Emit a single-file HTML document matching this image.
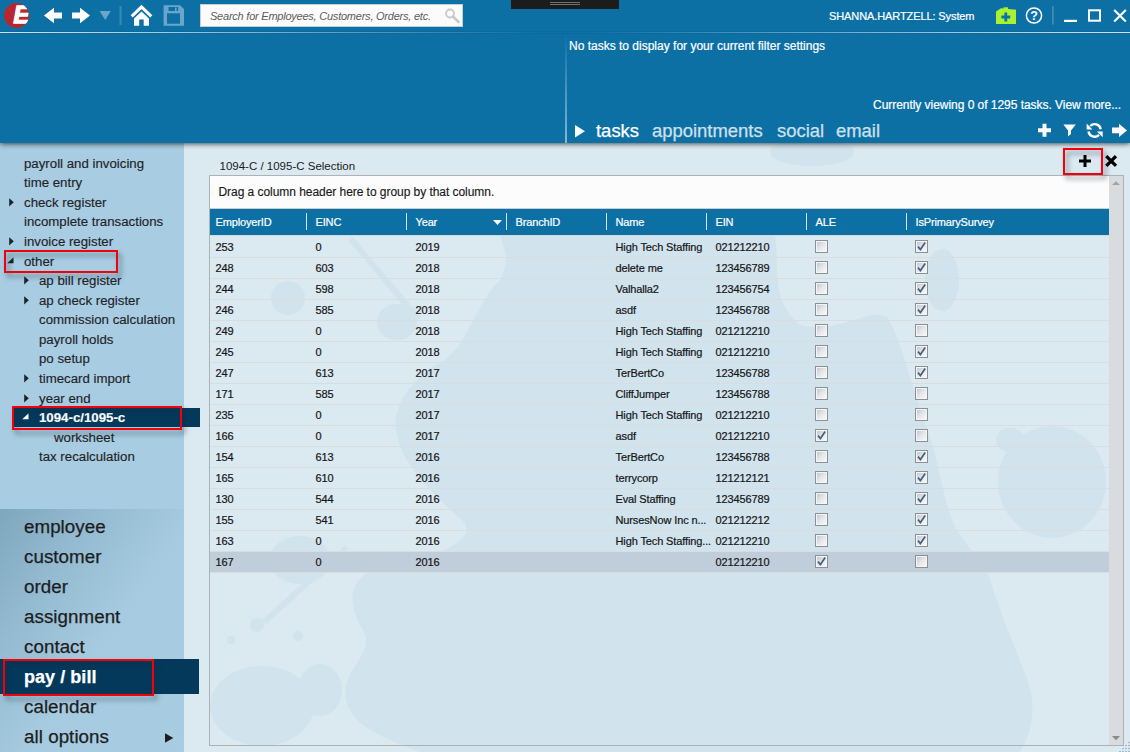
<!DOCTYPE html>
<html lang="en">
<head>
<meta charset="utf-8">
<title>1094-C / 1095-C Selection</title>
<style>
*{box-sizing:border-box;margin:0;padding:0}
html,body{width:1130px;height:752px;overflow:hidden}
body{position:relative;background:#dbe9f1;font-family:"Liberation Sans",sans-serif;color:#1a1a1a}
.abs{position:absolute}
i{font-style:normal}
/* header */
#hdr{left:0;top:0;width:1130px;height:143px;background:#0d70a5;box-shadow:0 1px 5px rgba(20,25,30,.75);z-index:5}
#hline{left:0;top:32px;width:1130px;height:1px;background:linear-gradient(90deg,rgba(205,227,240,1) 0%,rgba(180,212,231,.9) 14%,rgba(150,195,220,0) 48%,rgba(150,195,220,0) 52%,rgba(180,212,231,.9) 86%,rgba(205,227,240,1) 100%);box-shadow:0 0 0 1px rgba(0,60,110,.12)}
#vline{left:565px;top:34px;width:2px;height:109px;background:linear-gradient(180deg,rgba(150,195,222,0) 0%,rgba(150,195,222,.35) 40%,rgba(160,202,226,.8) 100%)}
#blacktab{left:511px;top:0;width:108px;height:9px;background:#1c1c1c}
#search{left:200px;top:4px;width:263px;height:23px;background:#fbfbfb;border:1px solid #c3ced6}
#search span{position:absolute;left:9px;top:4px;font:italic 11px/14px "Liberation Sans",sans-serif;color:#5c5c5c;white-space:nowrap;letter-spacing:-0.23px}
.seg{font-family:"Liberation Sans",sans-serif;white-space:nowrap;line-height:14px;-webkit-text-stroke:0.2px currentColor}
#user{left:829px;top:9px;font-size:11px;color:#fff;letter-spacing:-0.1px}
#notask{left:569px;top:39px;font-size:12px;color:#fff}
#viewing{left:873px;top:98px;font-size:12px;color:#fff;letter-spacing:-0.04px}
.tab{top:120px;font-size:18.45px;-webkit-text-stroke:0.25px currentColor;line-height:22px;color:#cfe0eb;white-space:nowrap}
/* sidebar */
#side{left:0;top:143px;width:184px;height:609px;background:#a8cce1}
#navbg{left:0;top:509px;width:184px;height:243px;background:linear-gradient(125deg,#7ea6bd 0%,#92b9cf 25%,#a6cbe0 55%,#a8cce1 100%)}
.ti{position:absolute;font-size:13.25px;-webkit-text-stroke:0.15px currentColor;color:#1f2328;white-space:nowrap;line-height:16px}
.sel{background:#04395b}
.nv{position:absolute;left:24px;font-size:18.75px;letter-spacing:0.05px;-webkit-text-stroke:0.25px currentColor;color:#1d1d1f;white-space:nowrap;line-height:22px}
.red{position:absolute;border:2px solid #f4000a;filter:drop-shadow(3px 4px 2.5px rgba(20,35,50,.5));z-index:9}
/* grid */
#grid{left:209px;top:175px;width:915px;height:571px;border:1px solid #aeb2b5}
#gp{left:210px;top:176px;width:899px;height:33px;background:#fcfcfc;border-bottom:1px solid #c9ced2}
#gp span{-webkit-text-stroke:0.15px currentColor;position:absolute;left:8.5px;top:9px;font-size:12px;line-height:14px;color:#1a1a1a;white-space:nowrap;letter-spacing:-0.05px}
#gh{left:210px;top:209px;width:899px;height:26px;background:#0d70a5}
#ghl{left:210px;top:235px;width:899px;height:1px;background:#d5d8db}
.hc{position:absolute;top:6px;-webkit-text-stroke:0.2px currentColor;font-size:11px;line-height:14px;color:#fff;white-space:nowrap;letter-spacing:-0.15px}
.hs{position:absolute;top:4px;width:1px;height:17px;background:#d6e6f0}
.row{position:absolute;left:210px;width:899px;height:21px;border-bottom:1px solid #dadde0}
.row span{position:absolute;top:4px;font-size:11px;color:#161616;-webkit-text-stroke:0.2px currentColor;white-space:nowrap;line-height:13px;letter-spacing:-0.12px}
.cb{position:absolute;top:3px;width:13px;height:13px;border:1px solid #8e8f90;background:#f4f5f6;padding:0}
.cb:before{content:"";position:absolute;left:1px;top:1px;width:9px;height:9px;background:linear-gradient(135deg,#c2c9d2,#e4e7eb 50%,#f6f7f8)}
#sb{left:1109px;top:176px;width:14px;height:569px;background:#d9dcde}
#title{left:219.5px;top:159px;font-size:11.5px;line-height:14px;color:#1a1a1a;white-space:nowrap}
</style>
</head>
<body>
<div id="hdr" class="abs">
 <div id="hline" class="abs"></div>
 <div id="vline" class="abs"></div>
 <div id="blacktab" class="abs"><i class="abs" style="left:39px;top:2px;width:30px;height:1px;background:#707070"></i><i class="abs" style="left:39px;top:4px;width:30px;height:1px;background:#707070"></i></div>
 <svg class="abs" style="left:0;top:0" width="200" height="32" viewBox="0 0 200 32">
<defs><clipPath id="lc"><circle cx="16.5" cy="15.5" r="12.5"/></clipPath></defs>
<circle cx="16.5" cy="15.5" r="12.5" fill="#b7282e"/>
<g clip-path="url(#lc)"><text x="13.4" y="23.2" font-family="Liberation Sans, sans-serif" font-weight="bold" font-style="italic" font-size="23.5" fill="#fff" stroke="#fff" stroke-width="1.3">E</text></g>
<path d="M44 15.5L54 7.8V12.6H62V18.6H54V23.2Z" fill="#fff"/>
<path d="M72 12.6H80V7.8L90 15.5L80 23.2V18.6H72Z" fill="#fff"/>
<path d="M99.6 11H110.8L105.2 20Z" fill="#6ba6ca"/>
<rect x="119.5" y="6" width="2" height="19" fill="#3c88b5"/>
<path d="M131.7 16.4L141.5 6.9L151.3 16.4" fill="none" stroke="#fff" stroke-width="3"/>
<path d="M134 18.6L141.5 11.6L149 18.6V25.8H143.7V19.6H139.2V25.8H134Z" fill="#fff"/>
<path fill-rule="evenodd" d="M163.6 5.3H180L184 9V25.8H163.6Z M168.5 7H178.2V11H168.5Z M167 13.3H180V23.7H167Z" fill="#6ba6ca"/>
<rect x="175" y="7.6" width="1.6" height="3.4" fill="#6ba6ca"/>
</svg>
<svg class="abs" style="left:440px;top:6px;z-index:3" width="22" height="20" viewBox="440 6 22 20">
<circle cx="450" cy="13.5" r="4" fill="none" stroke="#c9c9c9" stroke-width="1.8"/>
<path d="M453 16.5L458.5 22" stroke="#c9c9c9" stroke-width="2.6" stroke-linecap="round"/>
</svg>
<svg class="abs" style="left:990px;top:0" width="140" height="32" viewBox="990 0 140 32">
<path d="M996 11.5L1001 8.3L1016 9.8V24H996Z" fill="#a8f230"/>
<rect x="1003.5" y="7.3" width="4.5" height="2" fill="#a8f230"/>
<path d="M1004.4 12.6H1007.2V15.6H1010.2V18.4H1007.2V21.4H1004.4V18.4H1001.4V15.6H1004.4Z" fill="#0d70a5"/>
<circle cx="1034" cy="15.5" r="7.6" fill="none" stroke="#fff" stroke-width="1.5"/>
<text x="1034" y="20" text-anchor="middle" font-family="Liberation Sans, sans-serif" font-weight="bold" font-size="12.5" fill="#fff">?</text>
<rect x="1052" y="6" width="1.8" height="18.5" fill="#3f8ab6"/>
<rect x="1064" y="19.8" width="13" height="2.2" fill="#fff"/>
<rect x="1089" y="10.3" width="11" height="10.4" fill="none" stroke="#fff" stroke-width="2"/>
<path d="M1114.2 10L1125.8 21.5M1125.8 10L1114.2 21.5" stroke="#fff" stroke-width="2.2"/>
</svg>
<svg class="abs" style="left:570px;top:118px" width="560" height="24" viewBox="570 118 560 24">
<path d="M575 125.1L585 131.2L575 137.4Z" fill="#fff"/>
<path d="M1042.5 123.8H1046.5V128.2H1051V132.2H1046.5V136.7H1042.5V132.2H1038V128.2H1042.5Z" fill="#fff"/>
<path d="M1063.4 124.5H1075.8L1071 130.5V134L1068 136.4V130.5Z" fill="#fff"/>
<path d="M1090.2 126.0A6.2 6.2 0 0 1 1100.7 129.3" fill="none" stroke="#fff" stroke-width="2.4"/>
<path d="M1099.0 134.8A6.2 6.2 0 0 1 1088.5 131.5" fill="none" stroke="#fff" stroke-width="2.4"/>
<path d="M1086.6 123.6V129.4H1092.4Z" fill="#fff"/>
<path d="M1102.7 137.2V131.4H1096.9Z" fill="#fff"/>
<path d="M1112 127.6H1119V123.8L1127 130.4L1119 137V133.2H1112Z" fill="#fff"/>
</svg>
 <div id="search" class="abs"><span>Search for Employees, Customers, Orders, etc.</span></div>
 <div id="user" class="abs seg">SHANNA.HARTZELL: System</div>
 <div id="notask" class="abs seg">No tasks to display for your current filter settings</div>
 <div id="viewing" class="abs seg">Currently viewing 0 of 1295 tasks. View more...</div>
 <div class="abs tab" style="left:596px;color:#fff">tasks</div>
 <div class="abs tab" style="left:652px">appointments</div>
 <div class="abs tab" style="left:777px">social</div>
 <div class="abs tab" style="left:836px">email</div>
</div>
<svg class="abs" style="left:184px;top:143px" width="946" height="609" viewBox="184 143 946 609">
<g fill="#d1e3ed">
<path d="M500 236L775 236C780 270 770 300 800 325C840 335 870 305 888 318C905 350 915 400 930 436C940 470 944 500 952 520C962 545 985 560 990 580C1000 612 1014 646 1026 676C1036 700 1034 730 1020 752H420C390 740 352 728 346 700C340 668 378 654 362 628C345 600 350 574 385 566C440 556 480 540 462 520C430 492 400 462 396 430C392 400 420 372 445 360C470 340 478 300 500 280C510 262 505 248 500 236Z"/>
<ellipse cx="942" cy="280" rx="17" ry="31"/>
<path d="M349 241L353 237L421 317L416 321Z"/>
<ellipse cx="397" cy="322" rx="20" ry="18"/>
<ellipse cx="1052" cy="482" rx="54" ry="56"/>
<ellipse cx="1010" cy="440" rx="14" ry="12"/>
<ellipse cx="262" cy="706" rx="52" ry="40"/>
<ellipse cx="320" cy="690" rx="22" ry="26"/>
<ellipse cx="300" cy="560" rx="30" ry="24"/>
<circle cx="288" cy="298" r="17"/>
<ellipse cx="812" cy="152" rx="42" ry="14"/>
<circle cx="257" cy="625" r="7"/><circle cx="231" cy="640" r="4"/><circle cx="298" cy="636" r="5"/>
<path d="M262 620L345 545L349 549L266 624Z"/>
</g>
</svg>
<div id="side" class="abs"></div>
<div id="navbg" class="abs"></div>
<div class="ti" style="left:24px;top:155.6px">payroll and invoicing</div>
<div class="ti" style="left:24px;top:175.18px">time entry</div>
<div class="ti" style="left:24px;top:194.76px">check register</div>
<svg class="abs" style="left:9px;top:197.9px" width="6" height="9"><path d="M0.2 0.2L4.8 4.3L0.2 8.4Z" fill="#1f2328"/></svg>
<div class="ti" style="left:24px;top:214.34px">incomplete transactions</div>
<div class="ti" style="left:24px;top:233.92px">invoice register</div>
<svg class="abs" style="left:9px;top:237.0px" width="6" height="9"><path d="M0.2 0.2L4.8 4.3L0.2 8.4Z" fill="#1f2328"/></svg>
<div class="ti" style="left:24px;top:253.5px">other</div>
<svg class="abs" style="left:7px;top:256.7px" width="7" height="7"><path d="M6.5 0.3V6.3H0.3Z" fill="#1f2328"/></svg>
<div class="ti" style="left:39px;top:273.08px">ap bill register</div>
<svg class="abs" style="left:24px;top:276.2px" width="6" height="9"><path d="M0.2 0.2L4.8 4.3L0.2 8.4Z" fill="#1f2328"/></svg>
<div class="ti" style="left:39px;top:292.66px">ap check register</div>
<svg class="abs" style="left:24px;top:295.8px" width="6" height="9"><path d="M0.2 0.2L4.8 4.3L0.2 8.4Z" fill="#1f2328"/></svg>
<div class="ti" style="left:39px;top:312.24px">commission calculation</div>
<div class="ti" style="left:39px;top:331.82px">payroll holds</div>
<div class="ti" style="left:39px;top:351.4px">po setup</div>
<div class="ti" style="left:39px;top:370.98px">timecard import</div>
<svg class="abs" style="left:24px;top:374.1px" width="6" height="9"><path d="M0.2 0.2L4.8 4.3L0.2 8.4Z" fill="#1f2328"/></svg>
<div class="ti" style="left:39px;top:390.56px">year end</div>
<svg class="abs" style="left:24px;top:393.7px" width="6" height="9"><path d="M0.2 0.2L4.8 4.3L0.2 8.4Z" fill="#1f2328"/></svg>
<div class="abs sel" style="left:13px;top:408px;width:187px;height:19px"></div>
<div class="ti" style="left:39px;top:410.14px;color:#fff;font-weight:bold">1094-c/1095-c</div>
<svg class="abs" style="left:22px;top:413.3px" width="7" height="7"><path d="M6.5 0.3V6.3H0.3Z" fill="#fff"/></svg>
<div class="ti" style="left:54px;top:429.72px">worksheet</div>
<div class="ti" style="left:39px;top:449.3px">tax recalculation</div>
<div class="nv" style="top:516px">employee</div>
<div class="nv" style="top:546px">customer</div>
<div class="nv" style="top:576px">order</div>
<div class="nv" style="top:606px">assignment</div>
<div class="nv" style="top:636px">contact</div>
<div class="abs sel" style="left:0;top:659px;width:199px;height:35px"></div>
<div class="nv" style="top:666px;color:#fff;font-weight:bold;font-size:18px">pay / bill</div>
<div class="nv" style="top:696px">calendar</div>
<div class="nv" style="top:726px">all options</div>
<svg class="abs" style="left:165px;top:733px" width="9" height="10"><path d="M0 0.3L8.3 5L0 9.7Z" fill="#1d1d1d"/></svg>
<div id="title" class="abs">1094-C / 1095-C Selection</div>
<div id="grid" class="abs"></div>
<div id="gp" class="abs"><span>Drag a column header here to group by that column.</span></div>
<div id="gh" class="abs"><span class="hc" style="left:5.5px">EmployerID</span><span class="hc" style="left:105.5px">EINC</span><i class="hs" style="left:96px"></i><span class="hc" style="left:205.5px">Year</span><i class="hs" style="left:196px"></i><span class="hc" style="left:305.5px">BranchID</span><i class="hs" style="left:296px"></i><span class="hc" style="left:405.5px">Name</span><i class="hs" style="left:396px"></i><span class="hc" style="left:505.5px">EIN</span><i class="hs" style="left:496px"></i><span class="hc" style="left:605.5px">ALE</span><i class="hs" style="left:596px"></i><span class="hc" style="left:705.5px">IsPrimarySurvey</span><i class="hs" style="left:696px"></i><svg class="abs" style="left:283px;top:10.5px" width="9" height="6"><path d="M0 0H9L4.5 5Z" fill="#fff"/></svg></div>
<div id="ghl" class="abs"></div>
<div id="sb" class="abs"></div>
<div class="row" style="top:237px"><span style="left:5.5px">253</span><span style="left:105.5px">0</span><span style="left:205.5px">2019</span><span style="left:405.5px">High Tech Staffing</span><span style="left:505.5px">021212210</span><i class="cb" style="left:605px"></i><i class="cb" style="left:705px"><svg width="11" height="11" viewBox="0 0 11 11" style="position:absolute;left:0;top:0"><path d="M2 5.6L4.4 8.6L9.2 1.6" fill="none" stroke="#46607f" stroke-width="1.7"/></svg></i></div>
<div class="row" style="top:258px"><span style="left:5.5px">248</span><span style="left:105.5px">603</span><span style="left:205.5px">2018</span><span style="left:405.5px">delete me</span><span style="left:505.5px">123456789</span><i class="cb" style="left:605px"></i><i class="cb" style="left:705px"><svg width="11" height="11" viewBox="0 0 11 11" style="position:absolute;left:0;top:0"><path d="M2 5.6L4.4 8.6L9.2 1.6" fill="none" stroke="#46607f" stroke-width="1.7"/></svg></i></div>
<div class="row" style="top:279px"><span style="left:5.5px">244</span><span style="left:105.5px">598</span><span style="left:205.5px">2018</span><span style="left:405.5px">Valhalla2</span><span style="left:505.5px">123456754</span><i class="cb" style="left:605px"></i><i class="cb" style="left:705px"><svg width="11" height="11" viewBox="0 0 11 11" style="position:absolute;left:0;top:0"><path d="M2 5.6L4.4 8.6L9.2 1.6" fill="none" stroke="#46607f" stroke-width="1.7"/></svg></i></div>
<div class="row" style="top:300px"><span style="left:5.5px">246</span><span style="left:105.5px">585</span><span style="left:205.5px">2018</span><span style="left:405.5px">asdf</span><span style="left:505.5px">123456788</span><i class="cb" style="left:605px"></i><i class="cb" style="left:705px"><svg width="11" height="11" viewBox="0 0 11 11" style="position:absolute;left:0;top:0"><path d="M2 5.6L4.4 8.6L9.2 1.6" fill="none" stroke="#46607f" stroke-width="1.7"/></svg></i></div>
<div class="row" style="top:321px"><span style="left:5.5px">249</span><span style="left:105.5px">0</span><span style="left:205.5px">2018</span><span style="left:405.5px">High Tech Staffing</span><span style="left:505.5px">021212210</span><i class="cb" style="left:605px"></i><i class="cb" style="left:705px"></i></div>
<div class="row" style="top:342px"><span style="left:5.5px">245</span><span style="left:105.5px">0</span><span style="left:205.5px">2018</span><span style="left:405.5px">High Tech Staffing</span><span style="left:505.5px">021212210</span><i class="cb" style="left:605px"></i><i class="cb" style="left:705px"><svg width="11" height="11" viewBox="0 0 11 11" style="position:absolute;left:0;top:0"><path d="M2 5.6L4.4 8.6L9.2 1.6" fill="none" stroke="#46607f" stroke-width="1.7"/></svg></i></div>
<div class="row" style="top:363px"><span style="left:5.5px">247</span><span style="left:105.5px">613</span><span style="left:205.5px">2017</span><span style="left:405.5px">TerBertCo</span><span style="left:505.5px">123456788</span><i class="cb" style="left:605px"></i><i class="cb" style="left:705px"><svg width="11" height="11" viewBox="0 0 11 11" style="position:absolute;left:0;top:0"><path d="M2 5.6L4.4 8.6L9.2 1.6" fill="none" stroke="#46607f" stroke-width="1.7"/></svg></i></div>
<div class="row" style="top:384px"><span style="left:5.5px">171</span><span style="left:105.5px">585</span><span style="left:205.5px">2017</span><span style="left:405.5px">CliffJumper</span><span style="left:505.5px">123456788</span><i class="cb" style="left:605px"></i><i class="cb" style="left:705px"></i></div>
<div class="row" style="top:405px"><span style="left:5.5px">235</span><span style="left:105.5px">0</span><span style="left:205.5px">2017</span><span style="left:405.5px">High Tech Staffing</span><span style="left:505.5px">021212210</span><i class="cb" style="left:605px"></i><i class="cb" style="left:705px"></i></div>
<div class="row" style="top:426px"><span style="left:5.5px">166</span><span style="left:105.5px">0</span><span style="left:205.5px">2017</span><span style="left:405.5px">asdf</span><span style="left:505.5px">021212210</span><i class="cb" style="left:605px"><svg width="11" height="11" viewBox="0 0 11 11" style="position:absolute;left:0;top:0"><path d="M2 5.6L4.4 8.6L9.2 1.6" fill="none" stroke="#46607f" stroke-width="1.7"/></svg></i><i class="cb" style="left:705px"></i></div>
<div class="row" style="top:447px"><span style="left:5.5px">154</span><span style="left:105.5px">613</span><span style="left:205.5px">2016</span><span style="left:405.5px">TerBertCo</span><span style="left:505.5px">123456788</span><i class="cb" style="left:605px"></i><i class="cb" style="left:705px"><svg width="11" height="11" viewBox="0 0 11 11" style="position:absolute;left:0;top:0"><path d="M2 5.6L4.4 8.6L9.2 1.6" fill="none" stroke="#46607f" stroke-width="1.7"/></svg></i></div>
<div class="row" style="top:468px"><span style="left:5.5px">165</span><span style="left:105.5px">610</span><span style="left:205.5px">2016</span><span style="left:405.5px">terrycorp</span><span style="left:505.5px">121212121</span><i class="cb" style="left:605px"></i><i class="cb" style="left:705px"><svg width="11" height="11" viewBox="0 0 11 11" style="position:absolute;left:0;top:0"><path d="M2 5.6L4.4 8.6L9.2 1.6" fill="none" stroke="#46607f" stroke-width="1.7"/></svg></i></div>
<div class="row" style="top:489px"><span style="left:5.5px">130</span><span style="left:105.5px">544</span><span style="left:205.5px">2016</span><span style="left:405.5px">Eval Staffing</span><span style="left:505.5px">123456789</span><i class="cb" style="left:605px"></i><i class="cb" style="left:705px"><svg width="11" height="11" viewBox="0 0 11 11" style="position:absolute;left:0;top:0"><path d="M2 5.6L4.4 8.6L9.2 1.6" fill="none" stroke="#46607f" stroke-width="1.7"/></svg></i></div>
<div class="row" style="top:510px"><span style="left:5.5px">155</span><span style="left:105.5px">541</span><span style="left:205.5px">2016</span><span style="left:405.5px">NursesNow Inc n...</span><span style="left:505.5px">021212212</span><i class="cb" style="left:605px"></i><i class="cb" style="left:705px"><svg width="11" height="11" viewBox="0 0 11 11" style="position:absolute;left:0;top:0"><path d="M2 5.6L4.4 8.6L9.2 1.6" fill="none" stroke="#46607f" stroke-width="1.7"/></svg></i></div>
<div class="row" style="top:531px"><span style="left:5.5px">163</span><span style="left:105.5px">0</span><span style="left:205.5px">2016</span><span style="left:405.5px">High Tech Staffing...</span><span style="left:505.5px">021212210</span><i class="cb" style="left:605px"></i><i class="cb" style="left:705px"><svg width="11" height="11" viewBox="0 0 11 11" style="position:absolute;left:0;top:0"><path d="M2 5.6L4.4 8.6L9.2 1.6" fill="none" stroke="#46607f" stroke-width="1.7"/></svg></i></div>
<div class="row" style="top:552px;background:#c0cedc;background-clip:padding-box"><span style="left:5.5px">167</span><span style="left:105.5px">0</span><span style="left:205.5px">2016</span><span style="left:505.5px">021212210</span><i class="cb" style="left:605px"><svg width="11" height="11" viewBox="0 0 11 11" style="position:absolute;left:0;top:0"><path d="M2 5.6L4.4 8.6L9.2 1.6" fill="none" stroke="#46607f" stroke-width="1.7"/></svg></i><i class="cb" style="left:705px"></i></div>
<div class="red" style="left:4px;top:250px;width:114px;height:23px"></div>
<div class="red" style="left:12px;top:406px;width:170px;height:24px"></div>
<div class="red" style="left:3px;top:659px;width:151px;height:37px"></div>
<div class="red" style="left:1063px;top:148px;width:40px;height:27px"></div>
<svg class="abs" style="left:1070px;top:150px;z-index:10" width="55" height="22" viewBox="1070 150 55 22">
<path d="M1083.5 155H1086.5V159.5H1091V162.5H1086.5V167H1083.5V162.5H1079V159.5H1083.5Z" fill="#000"/>
<path d="M1106.3 156.2L1116 165.9M1116 156.2L1106.3 165.9" stroke="#000" stroke-width="3.3"/>
</svg>
<svg class="abs" style="left:1109px;top:176px" width="14" height="569" viewBox="1109 176 14 569">
<path d="M1112 185L1116 181.3L1120 185Z" fill="#a3a3a3"/>
<path d="M1112 736L1116 740.2L1120 736Z" fill="#8a8a8a"/>
</svg>
<svg class="abs" style="left:1118px;top:740px" width="12" height="12" viewBox="0 0 12 12"><rect x="9.5" y="1" width="1.2" height="1.2" fill="#f4f8fb"/><rect x="10.3" y="1.8" width="1.3" height="1.3" fill="#8c9dbf"/><rect x="6.5" y="4" width="1.2" height="1.2" fill="#f4f8fb"/><rect x="7.3" y="4.8" width="1.3" height="1.3" fill="#8c9dbf"/><rect x="9.5" y="4" width="1.2" height="1.2" fill="#f4f8fb"/><rect x="10.3" y="4.8" width="1.3" height="1.3" fill="#8c9dbf"/><rect x="3.5" y="7" width="1.2" height="1.2" fill="#f4f8fb"/><rect x="4.3" y="7.8" width="1.3" height="1.3" fill="#8c9dbf"/><rect x="6.5" y="7" width="1.2" height="1.2" fill="#f4f8fb"/><rect x="7.3" y="7.8" width="1.3" height="1.3" fill="#8c9dbf"/><rect x="9.5" y="7" width="1.2" height="1.2" fill="#f4f8fb"/><rect x="10.3" y="7.8" width="1.3" height="1.3" fill="#8c9dbf"/><rect x="0.5" y="10" width="1.2" height="1.2" fill="#f4f8fb"/><rect x="1.3" y="10.8" width="1.3" height="1.3" fill="#8c9dbf"/><rect x="3.5" y="10" width="1.2" height="1.2" fill="#f4f8fb"/><rect x="4.3" y="10.8" width="1.3" height="1.3" fill="#8c9dbf"/><rect x="6.5" y="10" width="1.2" height="1.2" fill="#f4f8fb"/><rect x="7.3" y="10.8" width="1.3" height="1.3" fill="#8c9dbf"/><rect x="9.5" y="10" width="1.2" height="1.2" fill="#f4f8fb"/><rect x="10.3" y="10.8" width="1.3" height="1.3" fill="#8c9dbf"/></svg>
</body>
</html>
